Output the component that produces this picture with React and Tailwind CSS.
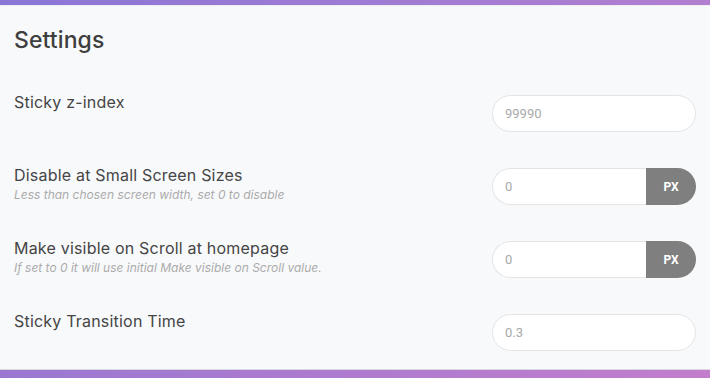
import React from 'react';

const rows = [
  { label: 'Sticky z-index', value: '99990' },
  { label: 'Disable at Small Screen Sizes', hint: 'Less than chosen screen width, set 0 to disable', value: '0', unit: 'PX' },
  { label: 'Make visible on Scroll at homepage', hint: 'If set to 0 it will use initial Make visible on Scroll value.', value: '0', unit: 'PX' },
  { label: 'Sticky Transition Time', value: '0.3' },
];

const Field = ({ value, unit }) => {
  if (!unit) {
    return (
      <div className="w-[204px] h-[37px] bg-white border border-[#e2e4e6] rounded-full flex items-center px-[12px]">
        <span className="text-[13px] text-[#a9a9a9] font-['Roboto',sans-serif]">{value}</span>
      </div>
    );
  }
  return (
    <div className="w-[204px] h-[37px] flex">
      <div className="flex-1 bg-white border border-r-0 border-[#e2e4e6] rounded-l-full flex items-center px-[12px]">
        <span className="text-[13px] text-[#a9a9a9] font-['Roboto',sans-serif]">{value}</span>
      </div>
      <div className="w-[50px] bg-[#7f7f7f] rounded-r-full flex items-center justify-center">
        <span className="text-[12px] font-bold text-white font-['Roboto',sans-serif]">{unit}</span>
      </div>
    </div>
  );
};

export default function App() {
  return (
    <div className="w-[710px] h-[378px] flex flex-col bg-[#f8f9fb] font-['Inter',sans-serif]">
      <div className="shrink-0 h-[5px] bg-gradient-to-r from-[#8a76d6] to-[#b27fd0]" />
      <div className="shrink-0 h-px bg-[#eceef3]" />

      <div className="flex-1 min-h-0 px-[14px]">
        <h1 className="mt-[18px] text-[23px] leading-[32px] font-medium text-[#3e3e3e] tracking-[0.1px]">
          Settings
        </h1>

        <div className="mt-[39px] flex flex-col gap-[36px]">
          {rows.map((row, i) => (
            <div key={i} className="flex justify-between items-start">
              <div className="-mt-[4px]">
                <div className="text-[16px] leading-[22px] text-[#454545] tracking-[0.2px]">{row.label}</div>
                {row.hint && (
                  <div className="text-[12px] leading-[18px] italic text-[#ababab]">{row.hint}</div>
                )}
              </div>
              <Field value={row.value} unit={row.unit} />
            </div>
          ))}
        </div>
      </div>

      <div className="shrink-0 h-px bg-[#d8d8de]" />
      <div className="shrink-0 h-[8px] bg-gradient-to-r from-[#9a78d2] to-[#c27dcc]" />
    </div>
  );
}
